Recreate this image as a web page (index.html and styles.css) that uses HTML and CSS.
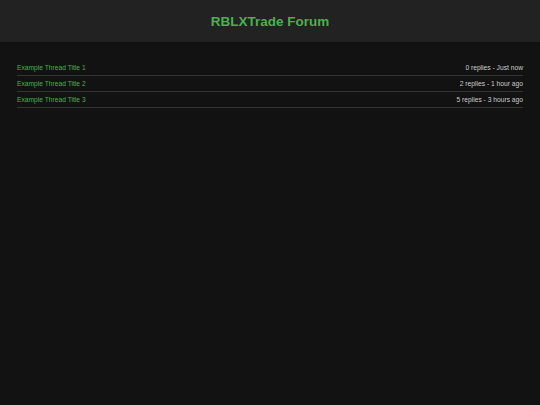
FILE: index.html
```html
<!DOCTYPE html>
<html lang="en">
<head>
    <meta charset="UTF-8" />
    <meta name="viewport" content="width=device-width, initial-scale=1.0"/>
    <title>RBLXTrade Forum</title>
    <link rel="stylesheet" href="styles.css">
</head>
<body>

<header>
    <h1>RBLXTrade Forum</h1>
</header>

<div class="container">
    <ul class="thread-list">
        <li>
            <a href="#">Example Thread Title 1</a>
            <span class="thread-meta">0 replies - Just now</span>
        </li>
        <li>
            <a href="#">Example Thread Title 2</a>
            <span class="thread-meta">2 replies - 1 hour ago</span>
        </li>
        <li>
            <a href="#">Example Thread Title 3</a>
            <span class="thread-meta">5 replies - 3 hours ago</span>
        </li>
    </ul>
</div>

</body>
</html>
```

FILE: styles.css
```css
body {
    margin:0;
    font-family:"Liberation Sans", Arial, sans-serif;
    background:#121212;
    color:#ddd;
}

header {
    background:#222;
    height:42px;
    display:flex;
    align-items:center;
    justify-content:center;
}

header h1 {
    margin:0;
    font-size:13.5px;
    color:#4caf50;
}

.container {
    padding:18px 17px;
}

.thread-list {
    list-style:none;
    padding:0;
    margin:0;
}

/* 每列：左邊標題，右邊回覆數與時間 */
.thread-list li {
    display:flex;
    justify-content:space-between;
    align-items:center;
    height:15px;
    border-bottom:1px solid #333;
    font-size:6.7px;
}

.thread-list li a {
    text-decoration:none;
    color:#4caf50;
}

.thread-meta {
    color:#ccc;
}
```
